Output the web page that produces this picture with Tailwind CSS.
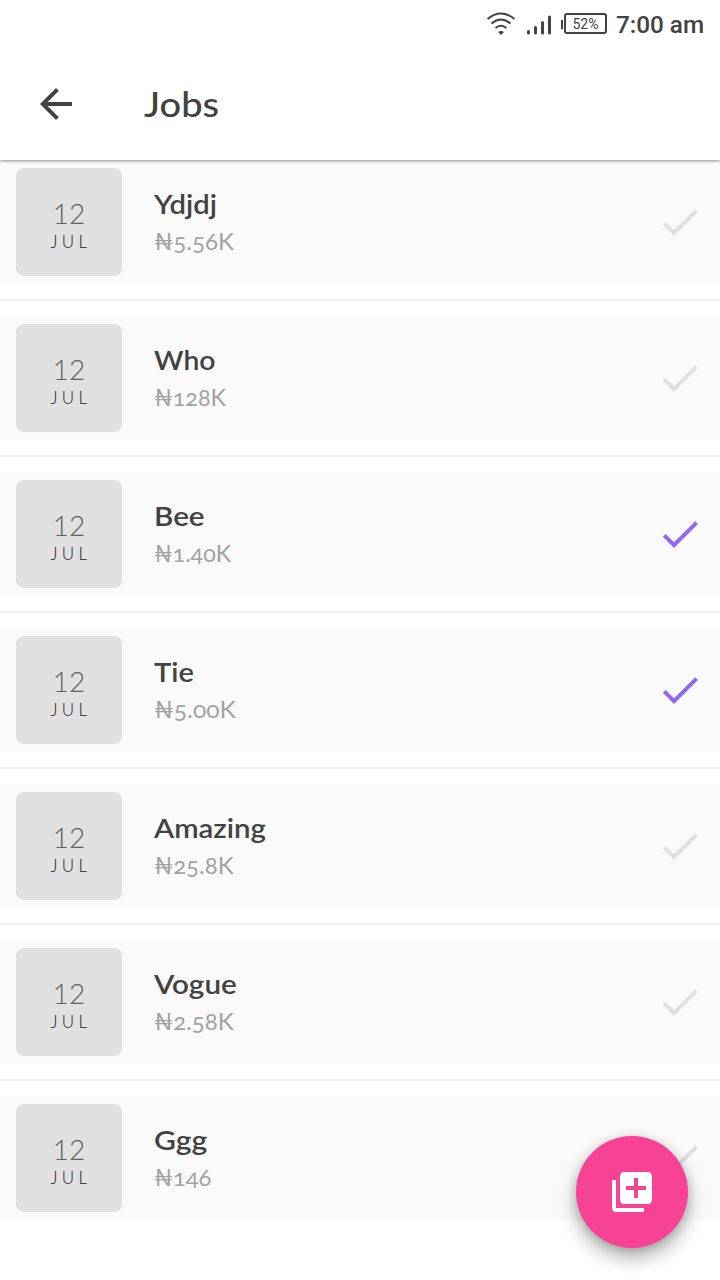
<!DOCTYPE html>
<html lang="en">
<head>
<meta charset="utf-8">
<title>Jobs</title>
<script src="https://cdn.jsdelivr.net/npm/@tailwindcss/browser@4"></script>
</head>
<body class="relative flex h-[1280px] w-[720px] flex-col overflow-hidden bg-white font-[Lato,sans-serif] text-[#424242]">
<header class="relative z-10 h-40 shrink-0 bg-white shadow-[0_1px_3px_rgba(0,0,0,0.45)]">
  <div class="flex h-12 items-center justify-end pr-4">
    <svg class="mr-[11px] h-[24px] w-[30px]" viewBox="0 0 30 24" fill="none" stroke="#424242" stroke-width="2"><path d="M1.500 7Q15-4 28.500 7M5.500 11.500Q15 3.500 24.500 11.500M9.500 16Q15 11.500 20.500 16"/><path d="M12 20Q15 18 18 20L15 23Z" fill="#424242" stroke="none"/></svg>
    <svg class="mr-2.5 mt-px h-5 w-[24px]" viewBox="0 0 24 20" stroke="#424242" stroke-width="3" stroke-linecap="round"><path d="M1.500 16.500V18M8.500 12.500V18M15.500 7.500V18M22.500 2V18"/></svg>
    <div class="mr-[1px] h-[9px] w-[2px] bg-[#424242]"></div>
    <div class="mb-px mr-[9px] flex h-[21px] w-[43px] items-center justify-center rounded-[3px] border-2 border-[#424242] font-[Roboto] text-[14px] leading-none">52%</div>
    <span class="w-[88px] whitespace-nowrap text-right font-[Roboto] text-[24.300px] font-medium leading-[48px] pt-[2px]">7:00 am</span>
  </div>
  <div class="flex h-28 items-center pl-8">
    <svg class="size-12" viewBox="0 0 24 24" fill="#424242"><path d="M20 11H7.830l5.590-5.590L12 4l-8 8 8 8 1.410-1.410L7.830 13H20v-2z"/></svg>
    <h1 class="ml-16 origin-left scale-x-[1.12] text-[34px] font-medium leading-10 pb-px">Jobs</h1>
  </div>
</header>
<main id="jobs"></main>
<button aria-label="Add job" class="absolute left-[576px] top-[1136px] z-20 flex size-28 items-center justify-center rounded-full bg-[#f74396] shadow-[0_10px_20px_rgba(0,0,0,0.3),0_2px_10px_rgba(0,0,0,0.16)]">
  <svg class="size-12" viewBox="0 0 24 24" fill="#fff"><path d="M4 6H2v14c0 1.100.9 2 2 2h14v-2H4V6zm16-4H8c-1.100 0-2 .9-2 2v12c0 1.100.9 2 2 2h12c1.100 0 2-.9 2-2V4c0-1.100-.9-2-2-2zm-1 9h-4v4h-2v-4H9V9h4V5h2v4h4v2z"/></svg>
</button>
<script>
// name, pay, completed, horizontal stretch of name and of pay
const jobs = [
  ["Ydjdj", "₦5.56K", false, 1.125, 1.005],
  ["Who", "₦128K", false, 1.09, 0.975],
  ["Bee", "₦1.40K", true, 1.14, 0.97],
  ["Tie", "₦5.00K", true, 1.12, 1.03],
  ["Amazing", "₦25.8K", false, 1.13, 1],
  ["Vogue", "₦2.58K", false, 1.14, 1],
  ["Ggg", "₦146", false, 1.16, 0.99]
];
document.getElementById("jobs").innerHTML = jobs.map(([name, pay, done, ns, ps], i) => `
<article class="flex h-[124px] items-center bg-[#fafafa] pl-4 pr-4">
  <div class="flex h-[108px] w-[106px] flex-col items-center rounded-[8px] bg-[#e0e0e0] pt-[28px]">
    <span class="text-[28px] font-light leading-[34px] text-[#616161]">12</span>
    <span class="mt-px pl-[4px] text-[17px] font-light leading-[22px] tracking-[4.400px] text-[#212121]">JUL</span>
  </div>
  <div class="ml-8 flex flex-1 flex-col items-start">
    <span class="origin-left text-[26px] font-semibold leading-[38px]" style="transform:scaleX(${ns})">${name}</span>
    <span class="origin-left text-[24px] font-normal leading-[36px] text-[#a2a2a2] [font-feature-settings:'onum']" style="transform:scaleX(${ps})">${pay}</span>
  </div>
  <svg class="size-12 ${done ? "text-[#8f69ef]" : "text-[#e0e0e0]"}" viewBox="0 0 24 24" fill="currentColor"><path d="M9 16.170L4.830 12l-1.420 1.410L9 19 21 7l-1.410-1.410z"/></svg>
</article>${i < 6 ? '<div class="flex h-8 items-center"><div class="h-[2px] w-full bg-[#eeeeee]"></div></div>' : ""}`).join("");
</script>
</body>
</html>
